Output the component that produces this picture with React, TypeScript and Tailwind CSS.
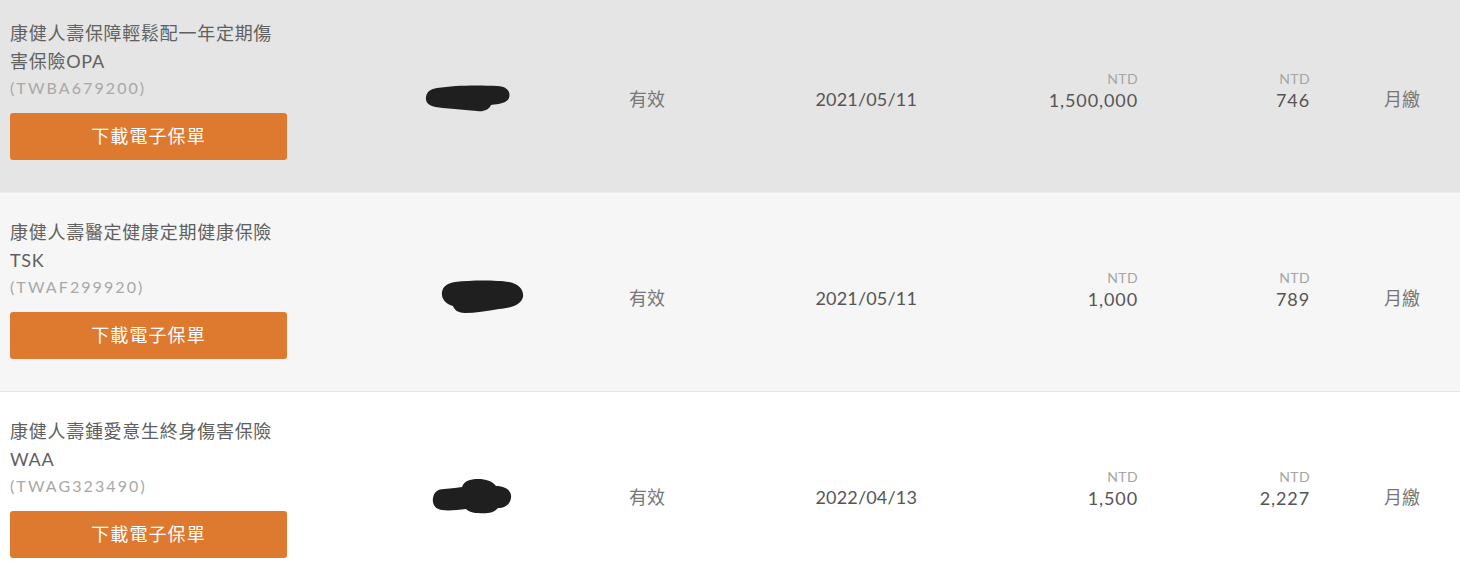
import type { ReactNode } from 'react';

type Policy = {
  name: string[];
  code: string;
  issued: string;
  sumInsured: string;
  premium: string;
  blob: ReactNode;
  blobOffset: string;
  rowClass: string;
};

const FONT = "font-['Lato','Noto_Sans_CJK_TC',sans-serif]";

const policies: Policy[] = [
  {
    name: ['康健人壽保障輕鬆配一年定期傷', '害保險OPA'],
    code: '(TWBA679200)',
    issued: '2021/05/11',
    sumInsured: '1,500,000',
    premium: '746',
    blobOffset: 'pl-[125px]',
    rowClass: 'bg-[#e5e5e5] border-b border-[#ececec]',
    blob: (
      <svg width="86" height="30" viewBox="0 0 86 30" fill="#1f1f1f">
        <path d="M12 4 C 30 1, 55 1, 72 2 C 82 2, 86 8, 84 14 C 82 19, 74 20, 66 21 C 64 26, 58 28, 52 27 C 40 26, 30 25, 18 24 C 6 23, 0 20, 1 13 C 2 7, 6 5, 12 4 Z" />
      </svg>
    ),
  },
  {
    name: ['康健人壽醫定健康定期健康保險', 'TSK'],
    code: '(TWAF299920)',
    issued: '2021/05/11',
    sumInsured: '1,000',
    premium: '789',
    blobOffset: 'pl-[141px]',
    rowClass: 'bg-[#f6f6f6] border-b border-[#e6e6e6]',
    blob: (
      <svg width="84" height="38" viewBox="0 0 84 38" fill="#1f1f1f">
        <path d="M14 3 C 30 1, 55 1, 68 3 C 78 5, 83 11, 82 18 C 80 26, 70 29, 58 30 C 46 32, 34 34, 24 34 C 16 34, 13 30, 12 27 C 5 25, 0 20, 1 13 C 2 7, 7 4, 14 3 Z" />
      </svg>
    ),
  },
  {
    name: ['康健人壽鍾愛意生終身傷害保險', 'WAA'],
    code: '(TWAG323490)',
    issued: '2022/04/13',
    sumInsured: '1,500',
    premium: '2,227',
    blobOffset: 'pl-[132px]',
    rowClass: 'bg-white',
    blob: (
      <svg width="82" height="38" viewBox="0 0 82 38" fill="#1f1f1f">
        <path d="M12 11 C 20 10, 26 10, 30 9 C 32 3, 38 1, 46 1 C 54 1, 60 3, 64 8 C 74 8, 80 13, 79 20 C 78 27, 72 30, 66 30 C 62 35, 54 36, 46 35 C 40 35, 36 33, 34 31 C 26 32, 16 33, 10 32 C 3 31, 0 26, 1 20 C 2 14, 6 11, 12 11 Z" />
      </svg>
    ),
  },
];

function Amount({ value, width }: { value: string; width: string }) {
  return (
    <div className={`${width} -mt-[4px] shrink-0 text-right`}>
      <p className="text-[14px] leading-[18px] tracking-[0.03em] text-[#a5a5a5]">NTD</p>
      <p className="text-[18px] leading-[24px] tracking-[0.05em] text-[#555]">{value}</p>
    </div>
  );
}

function PolicyRow({ policy }: { policy: Policy }) {
  return (
    <div className={`flex items-center ${policy.rowClass}`}>
      <div className="w-[300px] shrink-0 pb-[32px] pl-[10px] pt-[25px]">
        {policy.name.map((line) => (
          <p className="text-[18px] leading-[28px] tracking-[0.04em] text-[#606060]" key={line}>
            {line}
          </p>
        ))}
        <p className="text-[16px] leading-[26px] tracking-[0.13em] text-[#a8a8a8]">{policy.code}</p>
        <button
          className="mt-[12px] flex h-[47px] w-[277px] items-center justify-center rounded-[3px] bg-[#de7a2f] text-[18px] tracking-[0.06em] text-white"
          type="button"
        >
          下載電子保單
        </button>
      </div>
      <div className={`w-[300px] shrink-0 ${policy.blobOffset} mt-[12px]`}>{policy.blob}</div>
      <div className="mt-[12px] w-[94px] shrink-0 text-center text-[18px] text-[#777]">有效</div>
      <div className="mt-[12px] w-[223px] shrink-0 text-right text-[18px] tracking-[0.01em] text-[#555]">
        {policy.issued}
      </div>
      <Amount value={policy.sumInsured} width="w-[221px]" />
      <Amount value={policy.premium} width="w-[172px]" />
      <div className="mt-[12px] w-[150px] shrink-0 pl-[74px] text-[18px] text-[#777]">月繳</div>
    </div>
  );
}

export default function App() {
  return (
    <div className={`h-[565px] w-[1460px] overflow-hidden bg-white ${FONT}`}>
      <div className="-mt-[6px]">
        {policies.map((policy) => (
          <PolicyRow key={policy.code} policy={policy} />
        ))}
      </div>
    </div>
  );
}
